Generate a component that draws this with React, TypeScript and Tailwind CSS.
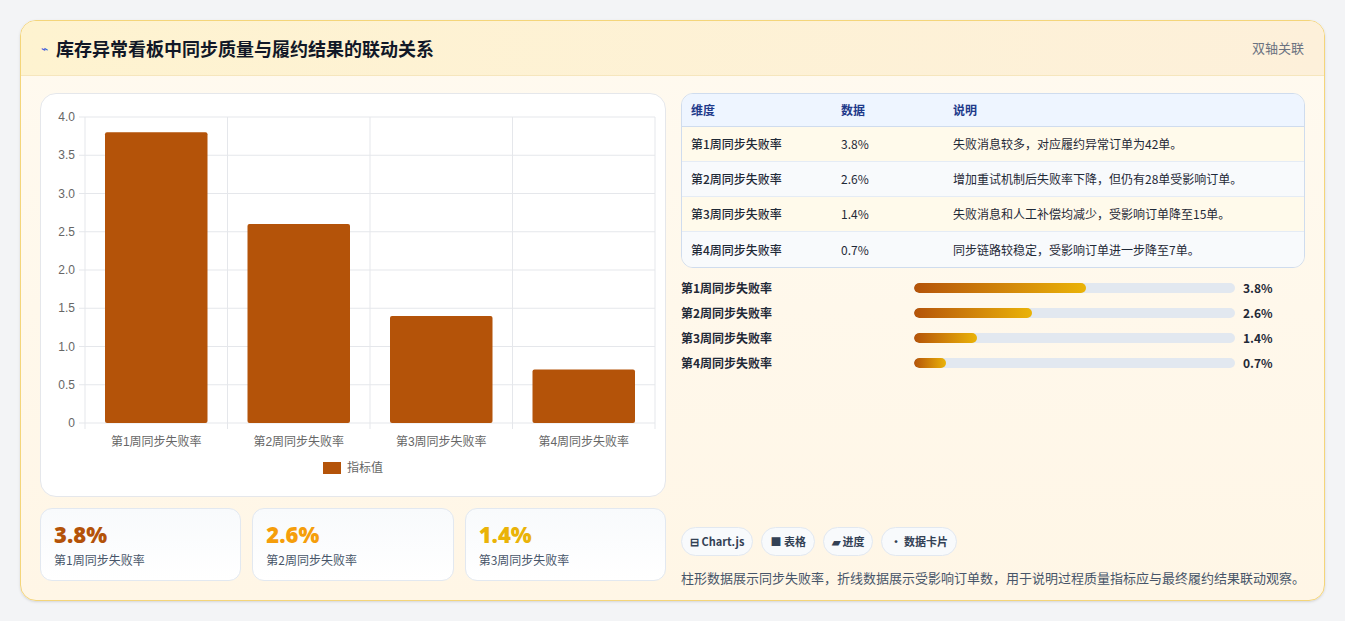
import React from "react";

const rows = [
  ["第1周同步失败率", "3.8%", "失败消息较多，对应履约异常订单为42单。"],
  ["第2周同步失败率", "2.6%", "增加重试机制后失败率下降，但仍有28单受影响订单。"],
  ["第3周同步失败率", "1.4%", "失败消息和人工补偿均减少，受影响订单降至15单。"],
  ["第4周同步失败率", "0.7%", "同步链路较稳定，受影响订单进一步降至7单。"],
];
const vals = [3.8, 2.6, 1.4, 0.7];

function Chart() {
  const W = 624, H = 402;
  const x0 = 44, x1 = 614, y0 = 23, y1 = 329;
  const cw = (x1 - x0) / 4;
  const yv = (v: number) => y1 - (v / 4) * (y1 - y0);
  const ticks = [0, 0.5, 1, 1.5, 2, 2.5, 3, 3.5, 4];
  return (
    <svg width={W} height={H} style={{ fontFamily: "'Liberation Sans','Noto Sans CJK SC',sans-serif" }}>
      {ticks.map((t) => (
        <g key={t}>
          <line x1={x0 - 6} x2={x1} y1={yv(t)} y2={yv(t)} stroke="#e5e7eb" />
          <text x={x0 - 10} y={yv(t) + 4} textAnchor="end" fontSize="12" fill="#666">{t === 0 ? "0" : t.toFixed(1)}</text>
        </g>
      ))}
      {[0, 1, 2, 3, 4].map((i) => (
        <line key={i} x1={x0 + i * cw} x2={x0 + i * cw} y1={y0} y2={y1 + 6} stroke="#e5e7eb" />
      ))}
      {vals.map((v, i) => (
        <g key={i}>
          <rect x={x0 + i * cw + 20} y={yv(v)} width={cw - 40} height={y1 - yv(v)} fill="#b45309" rx="2" />
          <text x={x0 + i * cw + cw / 2} y={y1 + 23} textAnchor="middle" fontSize="12" fill="#666">{rows[i][0]}</text>
        </g>
      ))}
      <rect x={282} y={368} width={18} height={12} fill="#b45309" />
      <text x={306} y={378} fontSize="12" fill="#666">指标值</text>
    </svg>
  );
}

export default function App() {
  return (
    <div className="min-h-[621px] bg-[#f3f4f6] pt-5 px-5" style={{ fontFamily: "'Noto Sans CJK SC','Noto Sans',sans-serif" }}>
      <div className="w-[1305px] h-[581px] rounded-2xl border border-[#f4d57a] bg-gradient-to-b from-[#fffaf0] to-[#fff6e6] overflow-hidden shadow-sm flex flex-col">
        <div className="h-[55px] flex items-center justify-between px-5 bg-gradient-to-r from-[#fef3d0] to-[#fdf0da] border-b border-[#f6e6bd]">
          <div className="flex items-center gap-2">
            <span className="text-[#3b5bdb] text-xs">⌁</span>
            <span className="text-[18px] font-bold text-[#111827]">库存异常看板中同步质量与履约结果的联动关系</span>
          </div>
          <span className="text-[13px] text-[#6b7280]">双轴关联</span>
        </div>
        <div className="flex gap-[15px] px-[19px] pt-[17px]">
          <div className="w-[626px] flex flex-col gap-[11px]">
            <div className="h-[404px] rounded-2xl border border-[#e5e7eb] bg-white overflow-hidden">
              <Chart />
            </div>
            <div className="grid grid-cols-3 gap-[11px]">
              {[["3.8%", "text-[#b45309]"], ["2.6%", "text-[#f59e0b]"], ["1.4%", "text-[#eab308]"]].map(([v, c], i) => (
                <div key={i} className="h-[73px] rounded-xl border border-[#e2e8f0] bg-gradient-to-b from-[#f8fafc] to-white px-[13px] pt-[10px]">
                  <div className={`text-[22px] font-extrabold leading-[30px] ${c}`} style={{ fontFamily: "'Open Sans',sans-serif" }}>{v}</div>
                  <div className="text-[12px] text-[#475569] mt-[2px]">{rows[i][0]}</div>
                </div>
              ))}
            </div>
          </div>
          <div className="w-[626px] flex flex-col">
            <div className="rounded-xl border border-[#cfdcee] overflow-hidden text-[12px] text-[#1f2937]">
              <div className="flex h-[33px] items-center bg-[#eef5ff] border-b border-[#cfdcee] font-semibold text-[#1e3a8a] px-[9px]">
                <div className="w-[150px]">维度</div><div className="w-[112px]">数据</div><div>说明</div>
              </div>
              {rows.map((r, i) => (
                <div key={i} className={`flex h-[35px] items-center px-[9px] border-b border-[#e5ecf5] last:border-b-0 ${i % 2 === 0 ? "bg-[#fffaeb]" : "bg-[#f8fafc]"}`}>
                  <div className="w-[150px] font-medium">{r[0]}</div><div className="w-[112px]">{r[1]}</div><div>{r[2]}</div>
                </div>
              ))}
            </div>
            <div className="flex flex-col gap-[11px] mt-[13px]">
              {rows.map((r, i) => (
                <div key={i} className="flex items-center h-[14px] text-[12px] font-semibold text-[#1f2937]">
                  <div className="w-[233px]">{r[0]}</div>
                  <div className="w-[321px] h-[10px] rounded-full bg-[#e2e8f0] overflow-hidden">
                    <div className="h-full rounded-full bg-gradient-to-r from-[#b45309] to-[#eab308]" style={{ width: `${(vals[i] / 7.1) * 100}%` }} />
                  </div>
                  <div className="ml-[8px]">{r[1]}</div>
                </div>
              ))}
            </div>
            <div className="flex gap-[8px] mt-[157px] text-[11px] font-semibold text-[#334155]">
              {["⊟ Chart.js", "■ 表格", "▰ 进度", "• 数据卡片"].map((t) => (
                <span key={t} className="h-[29px] px-[8px] flex items-center rounded-full border border-[#e2e8f0] bg-[#f8fafc]">{t}</span>
              ))}
            </div>
            <div className="mt-[12px] text-[13px] text-[#475569]">柱形数据展示同步失败率，折线数据展示受影响订单数，用于说明过程质量指标应与最终履约结果联动观察。</div>
          </div>
        </div>
      </div>
    </div>
  );
}
